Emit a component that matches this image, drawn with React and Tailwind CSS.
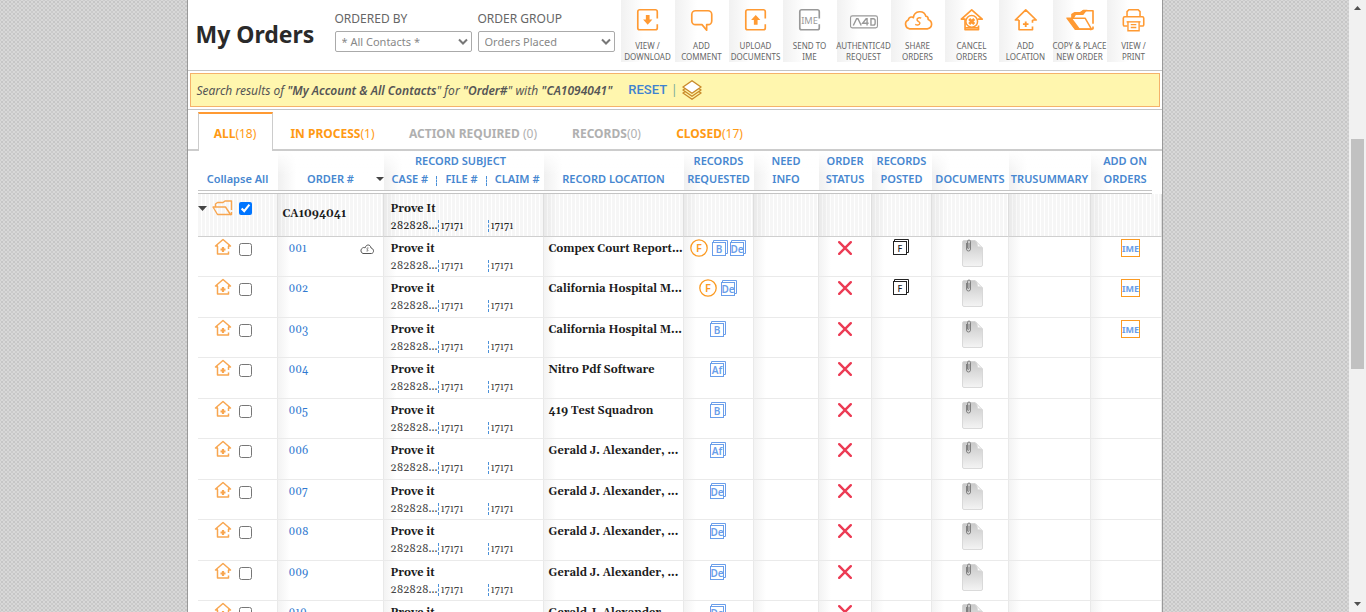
const SANS = "font-['Noto_Sans','Open_Sans',sans-serif]";
const SERIF = "font-[Georgia,Gelasio,'Liberation_Serif',serif]";

const shade =
  "bg-[linear-gradient(to_bottom,#ffffff_0px,#ffffff00_24px),linear-gradient(to_right,#f0f0f0,#ffffff_18px)]";
const bodyShade =
  "bg-[linear-gradient(to_right,#f3f3f3,#ffffff_12px)] border-r border-r-[#e9e9e9]";
const groupShade =
  "bg-[linear-gradient(to_right,#0000000d,#00000000_14px),repeating-linear-gradient(to_right,#f6f6f6_0px,#f6f6f6_3px,#ffffff_3px,#ffffff_4px)] border-r border-r-[#dedede]";

function Svg({ children, className = "", box = "0 0 28 28" }) {
  return (
    <svg viewBox={box} className={className} fill="none" stroke="currentColor" aria-hidden="true">
      {children}
    </svg>
  );
}

const FRAME = "M24 12.500V5a2 2 0 0 0-2-2H5a2 2 0 0 0-2 2v17.500a2 2 0 0 0 2 2h17a2 2 0 0 0 2-2V18.500";

const toolIcons = {
  download: (
    <>
      <path d={FRAME} strokeWidth="1.800" />
      <path d="M11.700 8.500h4v5h3L13.700 19l-5-5.500h3z" fill="currentColor" stroke="none" />
    </>
  ),
  comment: (
    <path
      d="M7 4h13.500a4 4 0 0 1 4 4v7a4 4 0 0 1-4 4h-1.500v6l-5-6h-7a4 4 0 0 1-4-4V8a4 4 0 0 1 4-4z"
      strokeWidth="1.800"
      strokeLinejoin="round"
    />
  ),
  upload: (
    <>
      <path d={FRAME} strokeWidth="1.800" />
      <path d="M11.700 19h4v-5h3L13.700 8.500l-5 5.500h3z" fill="currentColor" stroke="none" />
    </>
  ),
  ime: (
    <>
      <path d={FRAME} strokeWidth="1.800" />
      <text x="13.500" y="18" textAnchor="middle" fontSize="10" fill="currentColor" stroke="none">IME</text>
    </>
  ),
  cancel: (
    <>
      <path d="M7 13H2.500L13.700 3 25 13h-4.500M6.500 13v11.500h14.500V20M6.500 22.500h14" strokeWidth="1.800" strokeLinejoin="round" />
      <circle cx="13.700" cy="15.500" r="6.300" strokeWidth="1.600" fill="#fff" />
      <path d="M11 13l5.400 5.200m0-5.200L11 18.200" strokeWidth="3" />
    </>
  ),
  location: (
    <>
      <path d="M6.500 14H2.500L13.700 3 25 14h-4M6.500 14v10.500H21V21M21 14v3" strokeWidth="1.800" strokeLinejoin="round" />
      <path d="M13.700 15.500v6M10.700 18.500h6" strokeWidth="2" />
    </>
  ),
};

function A4DIcon() {
  return (
    <Svg box="0 0 32 28" className="h-7 w-8 text-[#999]">
      <rect x="1.500" y="9.500" width="29" height="13" rx="2" strokeWidth="1.200" />
      <path d="M4.500 20L8 12.700h1.500L13 20" strokeWidth="1.500" />
      <path d="M19.300 20V12.700h-1L14.500 17.500H21" strokeWidth="1.500" />
      <path d="M23.500 12.700h2.500a2 2 0 0 1 2 2v2.800a2 2 0 0 1-2 2h-2.500z" strokeWidth="1.500" />
    </Svg>
  );
}

function CloudIcon() {
  return (
    <Svg box="0 0 32 28" className="h-7 w-8 text-[#ff9a33]">
      <path
        d="M7 23.500a5 5 0 0 1-1.500-9.500C6 11 9 10 11 11.500c1-8 11.500-8.500 13.500-1.500 2 0 2.500 1.500 2.500 3.500 5 2 5 9-1 10z"
        strokeWidth="1.800"
        strokeLinejoin="round"
      />
      <path d="M19.500 12c-2-1-5 0-4.500 2s3.500 1.500 3 3.700-3.500 2-5 1" strokeWidth="1.600" />
    </Svg>
  );
}

function CopyFolderIcon() {
  return (
    <Svg box="0 0 32 28" className="h-7 w-8 text-[#ff9a33]">
      <path d="M16 7l4-3h10v14M30 21v2.500L27 24.500" strokeWidth="1.800" strokeLinejoin="round" />
      <path d="M6.500 12V7.500L10 5.500h6L19.500 3H24l-4.500 5.500h-8L9.500 12z" fill="currentColor" stroke="none" />
      <path d="M2 12h19.500l7 12H11z" strokeWidth="1.600" strokeLinejoin="round" fill="#fff" />
      <path d="M2 12l9 12.900h17.500l-1-1.900H15.500L7.500 12z" fill="currentColor" stroke="none" />
    </Svg>
  );
}

function PrintIcon() {
  return (
    <Svg className="h-7 w-7 text-[#ff9a33]">
      <path d="M6.500 10.500V5l2-2h10l2 2v5.500" strokeWidth="1.700" />
      <path d="M7 20.500H4A1.500 1.500 0 0 1 2.500 19v-7A1.500 1.500 0 0 1 4 10.500h19a1.500 1.500 0 0 1 1.500 1.500v7a1.500 1.500 0 0 1-1.500 1.500h-3" strokeWidth="1.700" />
      <path d="M6 16h15" strokeWidth="1.500" />
      <path d="M7.500 16v9.500h12V16M10.500 19h6M10.500 22h6" strokeWidth="1.500" />
    </Svg>
  );
}

const tools = [
  { icon: "download", lines: ["VIEW /", "DOWNLOAD"] },
  { icon: "comment", lines: ["ADD", "COMMENT"] },
  { icon: "upload", lines: ["UPLOAD", "DOCUMENTS"] },
  { icon: "ime", lines: ["SEND TO", "IME"], muted: true },
  { Icon: A4DIcon, lines: ["AUTHENTIC4D", "REQUEST"] },
  { Icon: CloudIcon, lines: ["SHARE", "ORDERS"] },
  { icon: "cancel", lines: ["CANCEL", "ORDERS"] },
  { icon: "location", lines: ["ADD", "LOCATION"] },
  { Icon: CopyFolderIcon, lines: ["COPY & PLACE", "NEW ORDER"] },
  { Icon: PrintIcon, lines: ["VIEW /", "PRINT"] },
];

function ToolButton({ icon, Icon, lines, muted }) {
  return (
    <button
      type="button"
      className="flex h-[62px] w-[54px] flex-col items-center bg-[linear-gradient(to_right,#f1f1f1,#ffffff_22px)] pt-[7px] text-[8px] leading-[11px] whitespace-nowrap text-[#666]"
    >
      {Icon ? <Icon /> : (
        <Svg className={muted ? "h-7 w-7 text-[#999]" : "h-7 w-7 text-[#ff9a33]"}>{toolIcons[icon]}</Svg>
      )}
      <span className="mt-[7px]">{lines[0]}</span>
      <span>{lines[1]}</span>
    </button>
  );
}

function SelectField({ id, label, value }) {
  return (
    <div className="flex w-[137px] flex-col">
      <label htmlFor={id} className="text-[12px] leading-4 text-[#666]">{label}</label>
      <div className="relative mt-1">
        <select
          id={id}
          className="block h-[21px] w-full appearance-none rounded-[2px] border border-[#aaa] bg-white pr-5 pl-1.5 text-[11px] leading-[19px] text-[#888]"
        >
          <option>{value}</option>
        </select>
        <svg viewBox="0 0 10 8" className="pointer-events-none absolute top-[7px] right-1 h-2 w-2.5" fill="none" stroke="#777" strokeWidth="2" aria-hidden="true">
          <path d="M1 1.500l4 4 4-4" />
        </svg>
      </div>
    </div>
  );
}

const tabs = [
  { name: "ALL", count: "(18)", on: true, active: true, box: "w-[75px]" },
  { name: "IN PROCESS", count: "(1)", on: true, box: "w-[120px]" },
  { name: "ACTION REQUIRED", count: " (0)", box: "w-[161px]" },
  { name: "RECORDS", count: "(0)", box: "w-[106px]" },
  { name: "CLOSED", count: "(17)", on: true, box: "w-[100px]" },
];

function HouseIcon() {
  return (
    <svg viewBox="0 0 18 18" className="h-[18px] w-[18px] text-[#f8a650]" fill="none" stroke="currentColor" strokeWidth="1.500" aria-hidden="true">
      <path d="M4 8H1.500L9 1.500 16.500 8H14M3.500 8v8h11V13.500M14.500 8v3" strokeLinejoin="round" />
      <path d="M9 9v5M6.500 11.500h5" strokeWidth="2.200" />
    </svg>
  );
}

function Pages({ text, dark }) {
  const color = dark ? "#222" : "#6a9eea";
  return (
    <svg viewBox="0 0 16 16" className="h-4 w-4" fill="none" stroke={color} aria-label={text}>
      <path d="M1.500 2V.5h14v13H14" />
      <rect x=".5" y="2.500" width="13" height="13" fill="#fff" />
      <text x="7" y="12.500" textAnchor="middle" fontSize={dark ? 9 : 10} fontWeight={dark ? 500 : 600} fill={color} stroke="none">{text}</text>
    </svg>
  );
}

function CircleF() {
  return (
    <svg viewBox="0 0 18 18" className="h-[18px] w-[18px]" fill="none" aria-label="F">
      <circle cx="9" cy="9" r="8.200" stroke="#fb9a22" strokeWidth="1.300" />
      <text x="9" y="13" textAnchor="middle" fontSize="11" fontWeight="600" fill="#fb9a22">F</text>
    </svg>
  );
}

function DocIcon() {
  return (
    <svg viewBox="0 0 21 28" className="h-7 w-[21px]" aria-hidden="true">
      <defs>
        <linearGradient id="paper" x1="0" y1="0" x2="0" y2="1">
          <stop offset="0" stopColor="#c9c9c9" />
          <stop offset="1" stopColor="#f4f4f4" />
        </linearGradient>
      </defs>
      <path d="M2 1.500h11l7.500 7.500v17a1.500 1.500 0 0 1-1.500 1.500H2A1.500 1.500 0 0 1 .5 26V3A1.500 1.500 0 0 1 2 1.500z" fill="url(#paper)" stroke="#d2d2d2" strokeWidth=".8" />
      <path d="M13 1.500l7.500 7.500c-2-1.500-4-1.500-5-1.200.2-2-.5-4.500-2.500-6.300z" fill="#fff" stroke="#d0d0d0" strokeWidth=".6" />
      <path d="M4.500 4v6a2 2 0 0 0 4 0V2.500a1.500 1.500 0 0 0-3 0V9a.8.8 0 0 0 1.500 0V4" fill="none" stroke="#777" strokeWidth=".9" />
    </svg>
  );
}

const rows = [
  { id: "001", place: "Compex Court Report...", req: ["F", "B", "De"], posted: true, ime: true, cloud: true },
  { id: "002", place: "California Hospital M...", req: ["F", "De"], posted: true, ime: true },
  { id: "003", place: "California Hospital M...", req: ["B"], ime: true },
  { id: "004", place: "Nitro Pdf Software", req: ["Af"] },
  { id: "005", place: "419 Test Squadron", req: ["B"] },
  { id: "006", place: "Gerald J. Alexander, ...", req: ["Af"] },
  { id: "007", place: "Gerald J. Alexander, ...", req: ["De"] },
  { id: "008", place: "Gerald J. Alexander, ...", req: ["De"] },
  { id: "009", place: "Gerald J. Alexander, ...", req: ["De"] },
  { id: "010", place: "Gerald J. Alexander, ...", req: ["De"] },
];

function Subject({ name, dark }) {
  const dash = "border-l border-dashed border-[#4a90d9] pl-0.5";
  return (
    <div className={SERIF}>
      <div className="text-[11px] leading-4 font-bold text-[#1b1b1b]">{name}</div>
      <div className={dark ? "mt-[3px] flex items-center text-[11px] leading-3 text-[#222]" : "mt-[3px] flex items-center text-[11px] leading-3 text-[#444]"}>
        <span className="w-[47px]">282828...</span>
        <span className={"w-[50px] text-[10px] " + dash}>17171</span>
        <span className={"text-[10px] " + dash}>17171</span>
      </div>
    </div>
  );
}

function OrderRow({ row, index }) {
  const cell = "border-b border-b-[#eaeaea] p-0 align-top " + bodyShade;
  return (
    <tr className={index % 2 ? "h-[41px]" : "h-[40px]"}>
      <td className="border-r border-b border-r-[#e9e9e9] border-b-[#eaeaea] p-0 align-top">
        <div className="flex items-start gap-[7px] pt-px pl-4">
          <HouseIcon />
          <input type="checkbox" aria-label={"Select order " + row.id} className="mt-[5px] h-[13px] w-[13px]" />
        </div>
      </td>
      <td className={cell}>
        <div className="flex items-center justify-between pt-1 pr-2 pl-[11px]">
          <a href="#order" className={"text-[11px] leading-4 text-[#3079d0] " + SERIF}>{row.id}</a>
          {row.cloud && (
            <Svg box="0 0 16 12" className="h-3 w-4 text-[#555]">
              <path d="M4 10.500a3 3 0 0 1-.5-5.500c1-.8 2-.5 2.500 0C7 1 11.500 1 12 5c3 .5 3.500 5 .5 5.500z" strokeWidth="1" />
              <path d="M9.500 5c-2-.5-2 1.500-1 1.700s.500 1.800-1 1.300" strokeWidth=".8" />
            </Svg>
          )}
        </div>
      </td>
      <td className={cell}><div className="pt-1 pl-[7px]"><Subject name="Prove it" /></div></td>
      <td className={cell}>
        <div className={"pt-1 pl-[5px] text-[11px] leading-4 font-bold whitespace-nowrap text-[#1b1b1b] " + SERIF}>{row.place}</div>
      </td>
      <td className={cell}>
        <div className="flex h-5 items-center justify-center gap-0.5 pt-0.5">
          {row.req.map((code) => (code === "F" ? <span key={code} className="mr-0.5"><CircleF /></span> : <Pages key={code} text={code} />))}
        </div>
      </td>
      <td className={cell} />
      <td className={cell}>
        <svg viewBox="0 0 14 14" className="mx-auto mt-1 h-3.5 w-3.5" stroke="#ec3b54" strokeWidth="2.400" strokeLinecap="round" aria-label="Not complete">
          <path d="M1.200 1.200l11.600 11.600M12.800 1.200L1.200 12.800" />
        </svg>
      </td>
      <td className={cell}>{row.posted && <div className="flex justify-center pt-0.5"><Pages text="F" dark /></div>}</td>
      <td className={cell}><div className="flex justify-center pt-0.5 pl-1.5"><DocIcon /></div></td>
      <td className={cell} />
      <td colSpan={2} className={cell}>
        {row.ime && (
          <div className="flex justify-center pt-0.5 pl-2.5">
            <span className="flex h-[18px] w-[19px] items-center justify-center border border-[#fb9a22] text-[9px] leading-none font-bold text-[#6a9eea]">IME</span>
          </div>
        )}
      </td>
    </tr>
  );
}

function OrdersTable() {
  const th = "h-[43px] border-b-4 border-double border-b-[#c4c4c4] p-0 pb-0.5 align-bottom font-semibold ";
  const g = "border-b border-b-[#cfcfcf] p-0 align-top " + groupShade;
  return (
    <table className="w-full table-fixed border-separate border-spacing-0">
      <colgroup>
        <col className="w-[80px]" />
        <col className="w-[106px]" />
        <col className="w-[160px]" />
        <col className="w-[140px]" />
        <col className="w-[70px]" />
        <col className="w-[65px]" />
        <col className="w-[53px]" />
        <col className="w-[60px]" />
        <col className="w-[77px]" />
        <col className="w-[82px]" />
        <col />
        <col className="w-[10px]" />
      </colgroup>
      <thead className="text-center text-[11px] leading-[18px] whitespace-nowrap text-[#4787d0]">
        <tr>
          <th className={th}><button type="button">Collapse All</button></th>
          <th className={th + shade}>
            <div className="flex items-center">
              <span className="flex-1 pl-2">ORDER #</span>
              <svg viewBox="0 0 8 4" className="h-1 w-2" fill="#444" aria-hidden="true"><path d="M0 0h8L4 4z" /></svg>
            </div>
          </th>
          <th className={th + shade}>
            <div className="pr-1.5">RECORD SUBJECT</div>
            <div className="flex items-center justify-between pr-1 pl-2">
              <span>CASE #</span>
              <span className="mt-1 h-2.5 border-l border-dashed border-[#4a90d9]" />
              <span>FILE #</span>
              <span className="mt-1 h-2.5 border-l border-dashed border-[#4a90d9]" />
              <span>CLAIM #</span>
            </div>
          </th>
          <th className={th + shade}>RECORD LOCATION</th>
          <th className={th + shade}>RECORDS<br />REQUESTED</th>
          <th className={th + shade}>NEED<br />INFO</th>
          <th className={th + shade}>ORDER<br />STATUS</th>
          <th className={th + shade}>RECORDS<br />POSTED</th>
          <th className={th + shade}>DOCUMENTS</th>
          <th className={th + shade}>TRUSUMMARY</th>
          <th className={th + shade}><span className="block pl-2">ADD ON<br />ORDERS</span></th>
          <td />
        </tr>
      </thead>
      <tbody>
        <tr className="h-[43px]">
          <td className="border-r border-b border-r-[#dedede] border-b-[#cfcfcf] bg-[repeating-linear-gradient(to_right,#f6f6f6_0px,#f6f6f6_3px,#ffffff_3px,#ffffff_4px)] p-0 align-top">
            <div className="flex items-center gap-[5px] pt-1.5">
              <svg viewBox="0 0 9 5" className="h-[5px] w-[9px]" fill="#444" aria-hidden="true"><path d="M0 0h9L4.500 5z" /></svg>
              <svg viewBox="0 0 21 16" className="h-4 w-[21px]" fill="none" stroke="#f8a650" strokeWidth="1.400" strokeLinejoin="round" aria-hidden="true">
                <path d="M3.500 7V4L5.500 2.500H11L13 1h6.500v9M19.500 12v2.500H18" />
                <path d="M1 7h12.500l5 7.500H5.500z" />
              </svg>
              <input type="checkbox" defaultChecked aria-label="Select all in CA1094041" className="ml-px h-[13px] w-[13px]" />
            </div>
          </td>
          <td className={g}><div className={"pt-3 pl-[5px] text-[11px] leading-4 font-bold text-[#1b1b1b] " + SERIF}>CA1094041</div></td>
          <td className={g}><div className="pt-[7px] pl-[7px]"><Subject name="Prove It" dark /></div></td>
          <td className={g} /><td className={g} /><td className={g} /><td className={g} />
          <td className={g} /><td className={g} /><td className={g} />
          <td colSpan={2} className={g} />
        </tr>
        {rows.map((row, i) => <OrderRow key={row.id} row={row} index={i} />)}
      </tbody>
    </table>
  );
}

export default function App() {
  return (
    <div className={"flex h-screen overflow-hidden bg-[#cfcfcf] " + SANS}>
      <div className="min-w-0 flex-1 overflow-hidden bg-[#d8d8d8] bg-[radial-gradient(#c6c6c6_1px,transparent_1px),radial-gradient(#cbcbcb_1px,transparent_1px)] bg-size-[4px_4px] bg-position-[0_0,2px_2px]">
        <main className="mx-auto min-h-full w-full max-w-[976px] border-x border-[#999] bg-white">
          <header className="flex h-[71px] items-start border-b border-[#c4c4c4] pl-2">
            <h1 className="w-[139px] pt-[18px] text-[23px] leading-8 font-bold whitespace-nowrap text-[#2a2a2a]">My Orders</h1>
            <form className="flex gap-1.5 pt-[11px]">
              <SelectField id="ordered-by" label="ORDERED BY" value="* All Contacts *" />
              <SelectField id="order-group" label="ORDER GROUP" value="Orders Placed" />
            </form>
            <nav className="ml-auto flex pr-px">
              {tools.map((tool) => <ToolButton key={tool.lines.join(" ")} {...tool} />)}
            </nav>
          </header>
          <section className="mx-0.5 mt-0.5 flex h-[34px] items-center border border-[#f5b26a] bg-[#fff6ae] pl-1.5 text-[12px] text-[#555] whitespace-nowrap">
            <p className="pt-0.5 italic">
              Search results of <b className="font-semibold">"My Account &amp; All Contacts</b>" for <b className="font-semibold">"Order#</b>" with <b className="font-semibold">"CA1094041"</b>
            </p>
            <a href="#reset" className="ml-4 font-[Roboto,sans-serif] text-[13px] font-medium text-[#3f83d0]">RESET</a>
            <span className="mx-1 text-[#7a9]">|</span>
            <svg viewBox="0 0 20 20" className="h-5 w-5" fill="#fff6ae" stroke="#c98a2b" strokeWidth="1.400" strokeLinejoin="round" aria-hidden="true">
              <path d="M1 13l9 6.300 9-6.300-9-6z" />
              <path d="M1 10l9 6.300 9-6.300-9-6z" />
              <path d="M1 7l9 6.300L19 7l-9-6.300z" fill="#fff" />
            </svg>
          </section>
          <div className="mt-0.5 border-t border-[#c4c4c4] pt-0.5">
            <div role="tablist" className="flex h-[39px] border-b-2 border-[#ccc] pl-2.5 text-[12px] whitespace-nowrap">
              {tabs.map((t) => (
                <button
                  key={t.name}
                  type="button"
                  role="tab"
                  aria-selected={!!t.active}
                  className={
                    t.box + " flex items-center justify-center whitespace-pre " +
                    (t.active ? "-mb-0.5 border-x border-t-2 border-x-[#ccc] border-t-[#ff9a33] bg-white pt-0.5 " : "pt-1.5 ") +
                    (t.on ? "text-[#ff9a14]" : "text-[#b0b0b0]")
                  }
                >
                  <b>{t.name}</b>{t.count}
                </button>
              ))}
            </div>
          </div>
          <div className="pl-2.5"><OrdersTable /></div>
        </main>
      </div>
      <div aria-hidden="true" className="flex w-[17px] flex-col items-center bg-[#f1f1f1] py-1.5">
        <svg viewBox="0 0 7 4" className="h-1 w-[7px]" fill="#505050"><path d="M0 4h7L3.500 0z" /></svg>
        <div className="w-full flex-1 px-0.5 pt-[129px]"><div className="h-[230px] w-[13px] bg-[#c1c1c1]" /></div>
        <svg viewBox="0 0 7 4" className="h-1 w-[7px]" fill="#505050"><path d="M0 0h7L3.500 4z" /></svg>
      </div>
    </div>
  );
}
